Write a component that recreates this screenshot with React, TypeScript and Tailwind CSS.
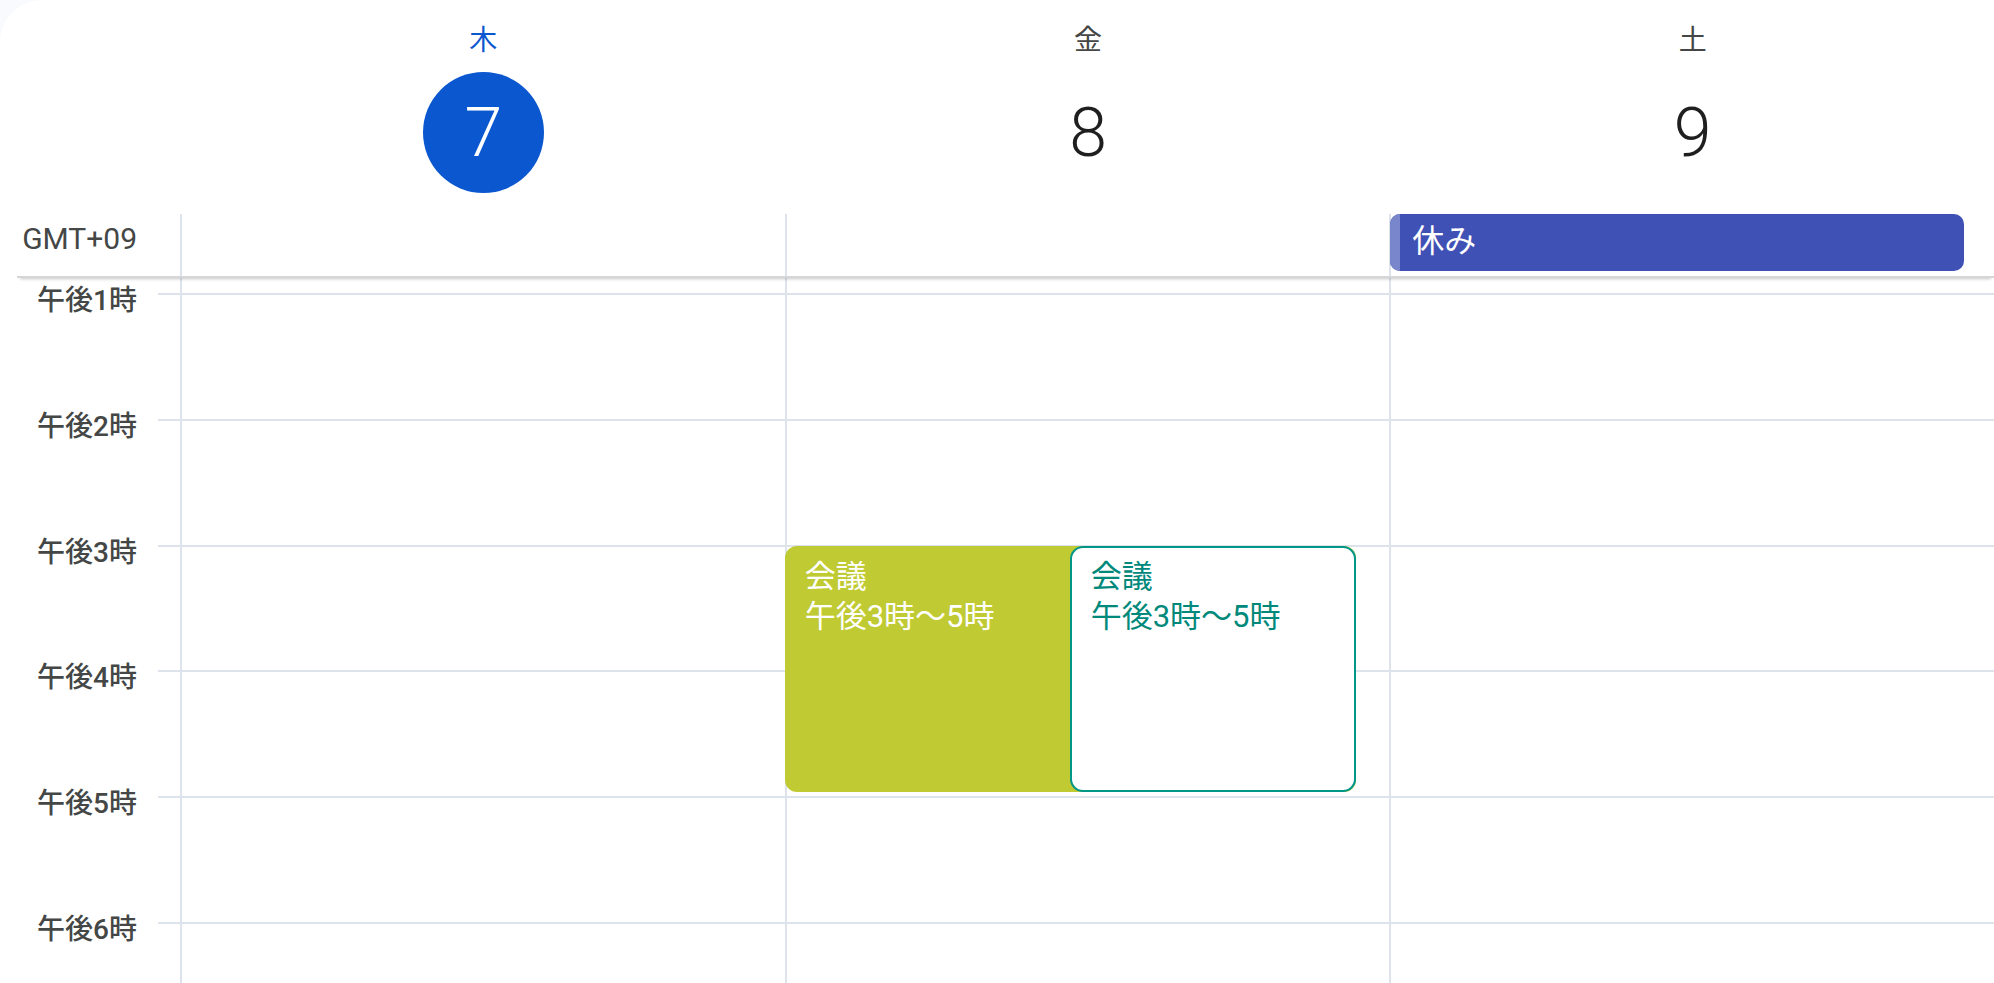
import React from "react";

const hours = [1, 2, 3, 4, 5, 6];
const days = [
  { n: "木", d: "7", today: true },
  { n: "金", d: "8", today: false },
  { n: "土", d: "9", today: false },
];

export default function App() {
  return (
    <div className="h-[983px] w-[1994px] overflow-hidden bg-[#f8fafd] font-[Roboto,'Noto_Sans_CJK_JP',sans-serif]">
      <div className="flex h-full flex-col rounded-tl-[42px] bg-white">
        {/* Header with day names and dates */}
        <div className="flex h-[214px] shrink-0">
          <div className="w-[180px] shrink-0" />
          {days.map((day) => (
            <div
              key={day.n}
              className="flex flex-1 flex-col items-center border-l-2 border-transparent pt-[23px]"
            >
              <div
                className={
                  day.today
                    ? "h-[36px] text-[28px] leading-[36px] text-[#0b57d0]"
                    : "h-[36px] text-[28px] leading-[36px] text-[#444746]"
                }
              >
                {day.n}
              </div>
              <div
                className={
                  day.today
                    ? "mt-[13px] flex h-[121px] w-[121px] items-center justify-center rounded-full bg-[#0b57d0] text-[68px] font-light leading-none text-white"
                    : "mt-[13px] flex h-[121px] w-[121px] items-center justify-center rounded-full text-[68px] font-light leading-none text-[#1f1f1f]"
                }
              >
                {day.d}
              </div>
            </div>
          ))}
        </div>

        {/* All-day row */}
        <div className="relative z-10 ml-[17px] flex h-[64px] shrink-0 border-b-2 border-[#d4d6d8] shadow-[0_4px_3px_-3px_rgba(0,0,0,0.22)]">
          <div className="w-[163px] shrink-0 pr-[43px] pt-[8px] text-right text-[30px] leading-[34px] text-[#444746]">
            GMT+09
          </div>
          <div className="flex-1 border-l-2 border-[#dde3ea]" />
          <div className="flex-1 border-l-2 border-[#dde3ea]" />
          <div className="flex-1 border-l-2 border-[#dde3ea]">
            <div className="-ml-[1px] mr-[30px] flex h-[57px] overflow-hidden rounded-[10px] bg-[#3f51b5]">
              <div className="w-[10px] shrink-0 bg-[#7986cb]" />
              <div className="pl-[12px] text-[32px] leading-[54px] text-white">休み</div>
            </div>
          </div>
        </div>

        {/* Time grid */}
        <div className="flex flex-1 overflow-hidden">
          <div className="w-[180px] shrink-0 pt-[15px]">
            {hours.map((h) => (
              <div key={h} className="relative h-[125.8px]">
                <div className="ml-auto h-[2px] w-[22px] bg-[#dde3ea]" />
                <span className="absolute right-[43px] top-[-9px] whitespace-nowrap text-[28px] font-medium leading-[34px] text-[#444746]">
                  午後{h}時
                </span>
              </div>
            ))}
          </div>
          {days.map((day, i) => (
            <div key={day.n} className="relative flex-1 border-l-2 border-[#dde3ea] pt-[15px]">
              {hours.map((h) => (
                <div key={h} className="h-[125.8px] border-t-2 border-[#dde3ea]" />
              ))}
              {i === 1 && (
                <>
                  <div className="absolute left-[-2px] top-[268px] h-[246px] w-[571px] rounded-[12px] bg-[#c0ca33] pl-[20px] pt-[11px] text-[31px] leading-[40px] text-white">
                    <div>会議</div>
                    <div>午後3時〜5時</div>
                  </div>
                  <div className="absolute left-[283px] top-[268px] h-[246px] w-[286px] rounded-[13px] border-2 border-[#009688] bg-white pl-[19px] pt-[9px] text-[31px] leading-[40px] text-[#00897b]">
                    <div>会議</div>
                    <div>午後3時〜5時</div>
                  </div>
                </>
              )}
            </div>
          ))}
        </div>
      </div>
    </div>
  );
}
